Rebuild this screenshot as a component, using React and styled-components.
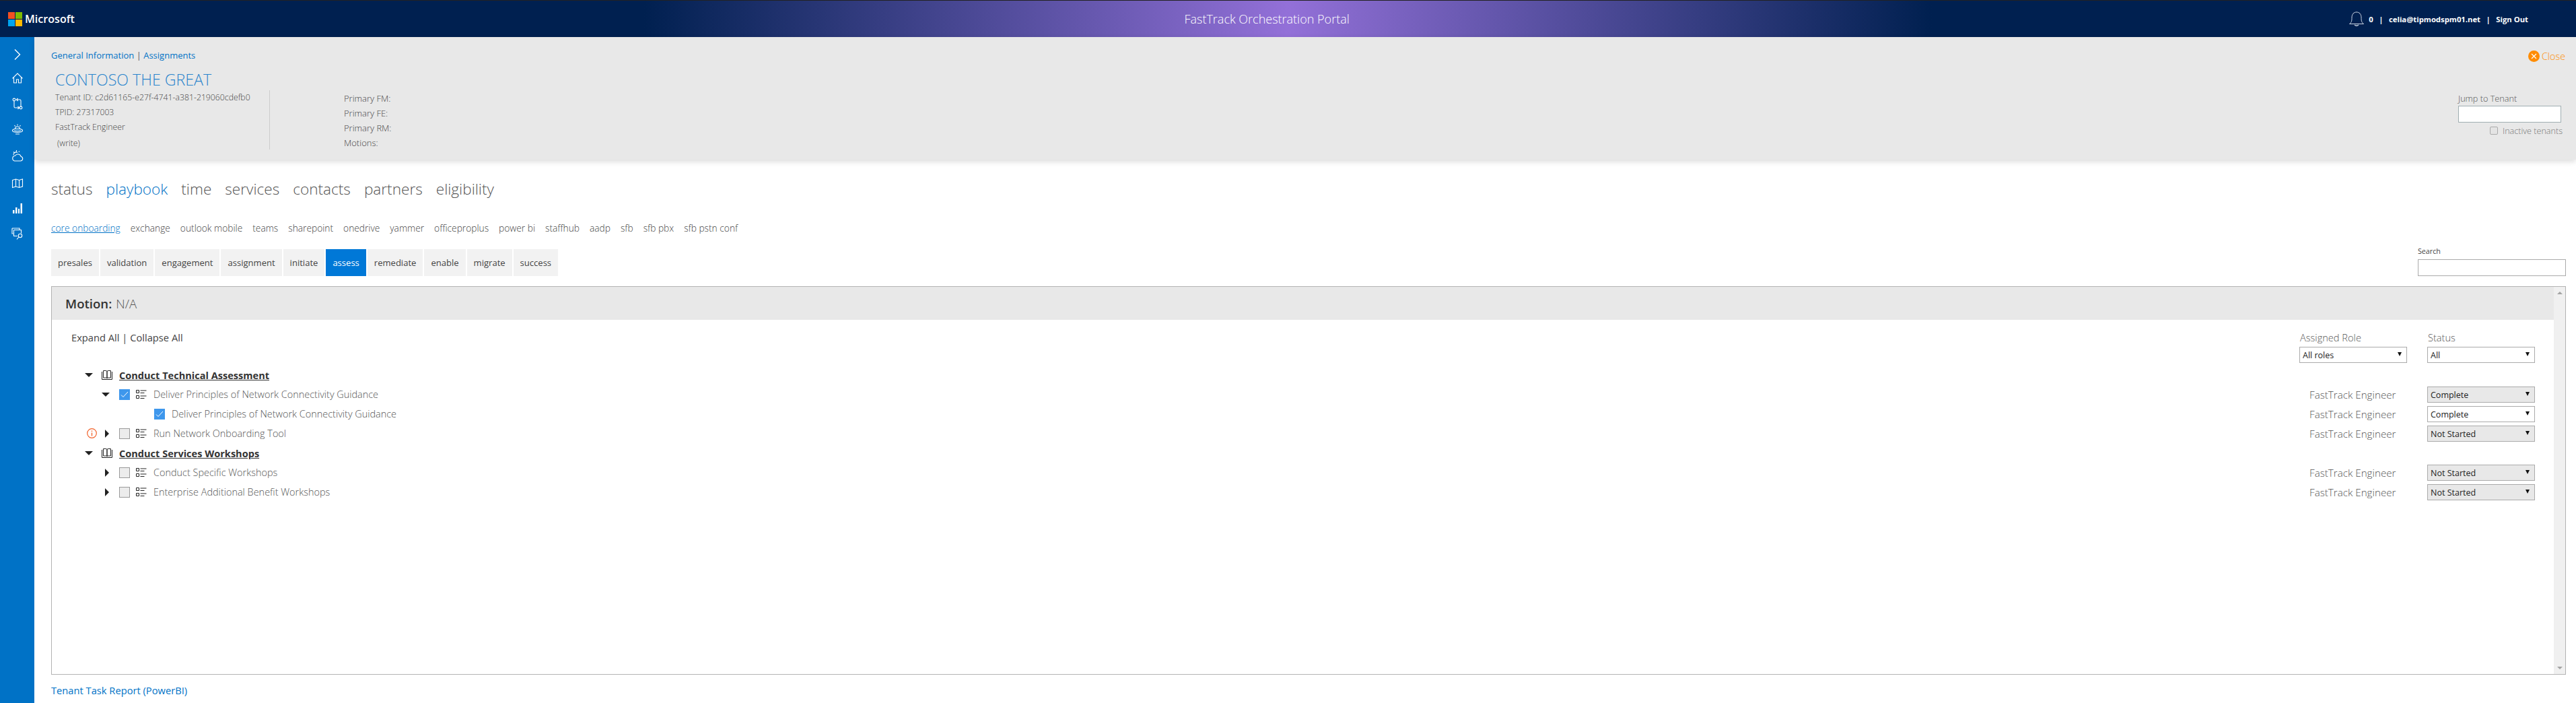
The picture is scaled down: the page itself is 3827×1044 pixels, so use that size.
import React from "react";
import styled, { createGlobalStyle } from "styled-components";

const Global = createGlobalStyle`
  html, body { margin: 0; padding: 0; background: #fff; height: 100%; overflow: hidden; }
  body { font-family: "Open Sans", "Noto Sans", sans-serif; font-weight: 300; color: #555; }
  * { box-sizing: border-box; }
`;

const Page = styled.div`display:flex;flex-direction:column;width:3827px;height:1044px;overflow:hidden;`;
const TopBar = styled.header`
  height:55px;flex:none;display:flex;align-items:center;padding:0 71px 0 12px;
  border-top:1px solid #222;color:#fff;
  background:linear-gradient(90deg,#002050 25%,#9370d8 50%,#002050 75%);
`;
const Logo = styled.div`display:flex;align-items:center;gap:4px;font-size:16.1px;font-weight:600;color:#fff;`;
const LogoGrid = styled.div`display:grid;grid-template-columns:10px 10px;grid-auto-rows:10px;gap:1px;`;
const Tile = styled.span`background:${p=>p.$c};`;
const PortalTitle = styled.div`flex:1;text-align:center;font-size:18px;font-weight:300;color:#fff;margin-left:164px;`;
const UserBox = styled.div`display:flex;align-items:center;font-size:11.3px;font-weight:700;color:#fff;white-space:nowrap;`;
const Sep = styled.span`margin:0 8.5px;`;
const Bell = styled.svg`width:24px;height:24px;margin-right:6px;`;

const Body = styled.div`flex:1;display:flex;min-height:0;`;
const Sidebar = styled.nav`width:51px;flex:none;background:#0072c6;display:flex;flex-direction:column;align-items:center;padding-top:8px;`;
const NavSlot = styled.div`height:${p=>p.$h}px;display:flex;align-items:center;justify-content:center;`;
const NavIcon = styled.svg`width:18px;height:18px;fill:none;stroke:#fff;stroke-width:${p=>p.$w||1.1};`;

const Main = styled.main`flex:1;min-width:0;display:flex;flex-direction:column;`;
const InfoPanel = styled.section`
  height:182px;flex:none;background:#e8e8e8;box-shadow:0 3px 8px rgba(0,0,0,.14);
  display:flex;justify-content:space-between;padding:18px 16px 0 25px;position:relative;
`;
const Crumbs = styled.div`font-size:13px;line-height:18px;color:#555;margin-bottom:12px;font-weight:400;`;
const CrumbLink = styled.span`color:#0072c6;`;
const Title = styled.h1`margin:0 0 0 6px;font-size:23.2px;line-height:31px;font-weight:300;color:#2a85cc;`;
const Details = styled.div`display:flex;margin-left:6px;`;
const DetailCol = styled.div`
  width:${p=>p.$w}px;height:88px;font-size:${p=>p.$divided?12.25:13}px;line-height:22px;color:#444;
  ${p=>p.$divided?"border-right:1px solid #ccc;":"padding:1px 0 0 110px;"}
`;
const Write = styled.div`margin:2px 0 0 3px;`;
const RightCol = styled.div`width:159px;display:flex;flex-direction:column;`;
const Close = styled.div`height:20px;display:flex;justify-content:flex-end;align-items:center;gap:3px;font-size:14.3px;color:#ff8c00;margin-bottom:44px;`;
const CloseDot = styled.svg`width:17px;height:17px;`;
const SmallLabel = styled.label`display:block;font-size:12.7px;line-height:18px;color:#555;`;
const JumpInput = styled.input`display:block;width:153px;height:25px;margin-top:2px;border:1px solid #a0aeb2;background:#fff;`;
const Inactive = styled.div`display:flex;align-items:center;gap:7px;height:14px;margin-top:5px;padding-left:47px;font-size:12.6px;color:#777;white-space:nowrap;`;
const MiniCheck = styled.span`width:12px;height:12px;border:1px solid #aaa;border-radius:2px;background:#e4e4e4;flex:none;`;

const Content = styled.div`padding:28px 15px 0 25px;display:flex;flex-direction:column;flex:1;min-height:0;`;
const BigTabs = styled.div`display:flex;gap:20px;height:32px;align-items:center;font-size:22.6px;line-height:32px;color:#555;`;
const BigTab = styled.span`color:${p=>p.$on?"#0072c6":"#555"};`;
const SubTabs = styled.div`display:flex;gap:15px;height:20px;margin-top:31px;align-items:center;font-size:13.75px;color:#444;`;
const SubTab = styled.span`color:${p=>p.$on?"#0072c6":"#444"};${p=>p.$on?"text-decoration:underline;":""}`;
const StageRow = styled.div`display:flex;align-items:flex-start;margin-top:22px;height:40px;`;
const Stage = styled.span`
  height:40px;display:flex;align-items:center;padding:0 10px;margin-right:2px;font-size:13.05px;font-weight:400;
  background:${p=>p.$on?"#0078d7":"#f2f2f2"};color:${p=>p.$on?"#fff":"#444"};
`;
const SearchBox = styled.div`margin-left:auto;width:220px;margin-top:-4px;`;
const SearchLabel = styled.label`display:block;font-size:10.7px;line-height:15px;font-weight:400;color:#444;`;
const SearchInput = styled.input`display:block;width:220px;height:25px;margin-top:4px;border:1px solid #aaa;background:#fff;`;

const Panel = styled.section`height:577px;margin-top:15px;border:1px solid #b3b3b3;display:flex;flex:none;`;
const PanelMain = styled.div`flex:1;min-width:0;display:flex;flex-direction:column;`;
const PanelHead = styled.div`height:49px;background:#e8e8e8;display:flex;align-items:center;padding-left:20px;font-size:18.6px;color:#555;`;
const Strong = styled.strong`font-weight:600;color:#333;margin-right:6px;`;
const Rail = styled.div`width:17px;flex:none;background:#f0f0f0;display:flex;flex-direction:column;justify-content:space-between;align-items:center;padding:7px 0;`;
const RailArrow = styled.span`width:0;height:0;border-left:4px solid transparent;border-right:4px solid transparent;${p=>p.$down?"border-top:4px solid #a3a3a3;":"border-bottom:4px solid #a3a3a3;"}`;
const Toolbar = styled.div`height:64px;padding:0 28px 0 29px;display:flex;justify-content:space-between;`;
const Expand = styled.div`font-size:14.7px;line-height:20px;margin-top:16px;font-weight:400;color:#444;`;
const Filters = styled.div`display:flex;gap:30px;padding-top:16px;`;
const FilterLabel = styled.label`display:block;font-size:14.6px;line-height:20px;height:24px;color:#555;padding-left:1px;`;
const SelectWrap = styled.div`position:relative;width:160px;height:24px;flex:none;&::after{content:"";position:absolute;right:8px;top:8px;border-left:3px solid transparent;border-right:3px solid transparent;border-top:6px solid #111;pointer-events:none;}`;
const Select = styled.select`
  appearance:none;width:160px;height:24px;display:block;padding:1px 0 0 4px;border:1px solid #aaa;border-radius:0;
  font-family:"Open Sans",sans-serif;font-size:12.5px;font-weight:400;color:#222;
  background:${p=>p.$muted?"#e8e8e8":"#fff"};
`;
const Rows = styled.div`margin-top:3px;padding:0 28px 0 49px;`;
const Row = styled.div`height:29px;display:flex;align-items:center;`;
const Slot = styled.span`width:${p=>p.$w}px;flex:none;display:flex;align-items:center;height:100%;`;
const WarnMark = styled.span`margin-left:3px;display:flex;`;
const CaretDown = styled.span`width:0;height:0;border-left:6px solid transparent;border-right:6px solid transparent;border-top:6px solid #222;`;
const CaretRight = styled.span`width:0;height:0;margin-left:5px;border-top:6px solid transparent;border-bottom:6px solid transparent;border-left:6px solid #222;`;
const Box = styled.span`
  width:16px;height:16px;display:flex;align-items:center;justify-content:center;
  ${p=>p.$on?"background:#3e97ec;":"background:#ececec;border:1px solid #999;"}
`;
const GroupTitle = styled.span`font-size:14.55px;font-weight:700;color:#333;text-decoration:underline;`;
const TaskText = styled.span`font-size:14.45px;color:#555;white-space:nowrap;`;
const Right = styled.span`margin-left:auto;display:flex;align-items:center;`;
const Role = styled.span`width:175px;font-size:15.2px;color:#555;`;
const Report = styled.div`margin-top:13px;font-size:14.7px;line-height:20px;color:#0072c6;font-weight:400;`;

const IconChevron = () => <NavIcon viewBox="0 0 18 18" $w={1.4}><path d="M5 1.5 12.5 9 5 16.5"/></NavIcon>;
const IconHome = () => <NavIcon viewBox="0 0 18 18"><path d="M1.500 9.500 9 2l7.500 7.500M3.500 8v8h4v-5h3v5h4V8"/></NavIcon>;
const IconFlow = () => <NavIcon viewBox="0 0 18 18"><circle cx="4" cy="3" r="1.900"/><circle cx="14" cy="15" r="1.900"/><path d="M4 5v8.500q0 1.500 1.500 1.500H11M9.500 13l2 2-2 2M14 13V4.500Q14 3 12.500 3H8M9.500 1 7.500 3l2 2"/></NavIcon>;
const IconLake = () => <NavIcon viewBox="0 0 18 18"><path d="M5.500 9.500a3.500 3.500 0 0 1 7 0zM9 2.500v2M4.500 4l1.200 1.600M13.500 4l-1.200 1.600"/><path d="M5 9.500C2 10 1.500 11 1.500 12c0 1.500 3 2.500 7.500 2.500s7.500-1 7.500-2.500c0-1-.5-2-3.500-2.500"/><path d="M4 12c2 1 8 1 10 0M6 17h6"/></NavIcon>;
const IconCloud = () => <NavIcon viewBox="0 0 18 18"><path d="M4.500 17h9a3.300 3.300 0 0 0 .7-6.500A4.800 4.800 0 0 0 5.500 9.200 4 4 0 0 0 4.500 17z"/><path d="M3 8a4 4 0 0 1 6-3.500M7.500 3V1M3 3.500l1.400 1.400M12 2.500 10.700 4"/></NavIcon>;
const IconMap = () => <NavIcon viewBox="0 0 18 18"><path d="M1.500 4.500 6.500 3l5 1.500L16.500 3v11l-5 1.500-5-1.500-5 1.500zM6.500 3v11M11.500 4.500v11"/></NavIcon>;
const BarsSvg = styled.svg`width:18px;height:18px;fill:#fff;`;
const IconBars = () => <BarsSvg viewBox="0 0 18 18"><path d="M2 12h2.500v5H2zM6 8h2.500v9H6zM10 10h2v7h-2zM13.500 2H16v15h-2.500z"/></BarsSvg>;
const IconScreen = () => <NavIcon viewBox="0 0 18 18"><path d="M1 1h11v2M1 1v8h1.500M3.500 3.500h11v5M3.500 3.500v9h5.500"/><circle cx="13" cy="12" r="2.700"/><path d="M11 14l-3 3.500"/></NavIcon>;

const BookSvg = styled.svg`width:16px;height:15px;fill:none;stroke:#222;stroke-width:1;`;
const Book = () => <BookSvg viewBox="0 0 16 15"><path d="M.5 3v11.500h15V3M2.500 1.500h4q1.500 0 1.500 1.500v10q0-1-1.500-1h-4zM13.500 1.500h-4Q8 1.500 8 3v10q0-1 1.500-1h4z"/></BookSvg>;
const ListSvg = styled.svg`width:16px;height:14px;fill:none;stroke:#222;stroke-width:1;`;
const ListIcon = () => <ListSvg viewBox="0 0 16 14"><path d="M.5.500h4v4h-4zM.5 8.500h4v4h-4zM6.500 1h9M6.500 4.500h6M6.500 9h9M6.500 12.500h6"/></ListSvg>;
const Info = () => <svg width="15" height="15" viewBox="0 0 15 15" fill="none" stroke="#f2622a"><circle cx="7.500" cy="7.500" r="6.800" strokeWidth="1.200"/><path d="M7.500 6.500v5M7.500 3.500v1.500" strokeWidth="1.300"/></svg>;
const Tick = () => <svg width="12" height="10" viewBox="0 0 12 10" fill="none" stroke="#fff" strokeWidth="1"><path d="M1 5.500 4 8.500 11 1"/></svg>;

const navs = [[36,IconChevron],[34,IconHome],[42,IconFlow],[32,IconLake],[48,IconCloud],[34,IconMap],[40,IconBars],[36,IconScreen]];
const bigTabs = ["status","playbook","time","services","contacts","partners","eligibility"];
const subTabs = ["core onboarding","exchange","outlook mobile","teams","sharepoint","onedrive","yammer","officeproplus","power bi","staffhub","aadp","sfb","sfb pbx","sfb pstn conf"];
const stages = ["presales","validation","engagement","assignment","initiate","assess","remediate","enable","migrate","success"];

const TaskRow = ({text,open,done,warn,status}) => (
  <Row>
    <Slot $w={25}>{warn && <WarnMark><Info/></WarnMark>}</Slot>
    <Slot $w={26}>{open ? <CaretDown/> : <CaretRight/>}</Slot>
    <Slot $w={25}><Box $on={done}>{done && <Tick/>}</Box></Slot>
    <Slot $w={26}><ListIcon/></Slot>
    <TaskText>{text}</TaskText>
    <Right><Role>FastTrack Engineer</Role><SelectWrap><Select $muted defaultValue={status}><option>{status}</option></Select></SelectWrap></Right>
  </Row>
);

export default function App(){
  return <Page><Global/>
    <TopBar>
      <Logo><LogoGrid><Tile $c="#f25022"/><Tile $c="#7fba00"/><Tile $c="#00a4ef"/><Tile $c="#ffb900"/></LogoGrid>Microsoft</Logo>
      <PortalTitle>FastTrack Orchestration Portal</PortalTitle>
      <UserBox>
        <Bell viewBox="0 0 24 24" fill="none" stroke="#cdd5e2" strokeWidth="1"><path d="M1.500 19.500C5 17 5 14 5 10c0-5 3-8 7-8s7 3 7 8c0 4 0 7 3.500 9.500z"/><path d="M9 21q3 2.500 6 0" strokeWidth="1.500"/></Bell>
        0<Sep>|</Sep>celia@tipmodspm01.net<Sep>|</Sep>Sign Out
      </UserBox>
    </TopBar>
    <Body>
      <Sidebar>{navs.map(([h,I],i)=><NavSlot key={i} $h={h}><I/></NavSlot>)}</Sidebar>
      <Main>
        <InfoPanel>
          <div>
            <Crumbs><CrumbLink>General Information</CrumbLink> | <CrumbLink>Assignments</CrumbLink></Crumbs>
            <Title>CONTOSO THE GREAT</Title>
            <Details>
              <DetailCol $w={319} $divided>
                <div>Tenant ID: c2d61165-e27f-4741-a381-219060cdefb0</div>
                <div>TPID: 27317003</div>
                <div>FastTrack Engineer</div>
                <Write>(write)</Write>
              </DetailCol>
              <DetailCol $w={300}>
                <div>Primary FM:</div><div>Primary FE:</div><div>Primary RM:</div><div>Motions:</div>
              </DetailCol>
            </Details>
          </div>
          <RightCol>
            <Close><CloseDot viewBox="0 0 17 17"><circle cx="8.500" cy="8.500" r="8.500" fill="#ff8c00"/><path d="M5 5l7 7M12 5l-7 7" stroke="#fff" strokeWidth="1.200"/></CloseDot>Close</Close>
            <SmallLabel>Jump to Tenant</SmallLabel>
            <JumpInput/>
            <Inactive><MiniCheck/>Inactive tenants</Inactive>
          </RightCol>
        </InfoPanel>
        <Content>
          <BigTabs>{bigTabs.map(t=><BigTab key={t} $on={t==="playbook"}>{t}</BigTab>)}</BigTabs>
          <SubTabs>{subTabs.map((t,i)=><SubTab key={t} $on={i===0}>{t}</SubTab>)}</SubTabs>
          <StageRow>
            {stages.map(t=><Stage key={t} $on={t==="assess"}>{t}</Stage>)}
            <SearchBox><SearchLabel>Search</SearchLabel><SearchInput/></SearchBox>
          </StageRow>
          <Panel>
            <PanelMain>
              <PanelHead><Strong>Motion:</Strong>N/A</PanelHead>
              <Toolbar>
                <Expand>Expand All | Collapse All</Expand>
                <Filters>
                  <div><FilterLabel>Assigned Role</FilterLabel><SelectWrap><Select defaultValue="All roles"><option>All roles</option></Select></SelectWrap></div>
                  <div><FilterLabel>Status</FilterLabel><SelectWrap><Select defaultValue="All"><option>All</option></Select></SelectWrap></div>
                </Filters>
              </Toolbar>
              <Rows>
                <Row><Slot $w={25}><CaretDown/></Slot><Slot $w={26}><Book/></Slot><GroupTitle>Conduct Technical Assessment</GroupTitle></Row>
                <TaskRow open done text="Deliver Principles of Network Connectivity Guidance" status="Complete"/>
                <Row>
                  <Slot $w={103}/>
                  <Slot $w={26}><Box $on><Tick/></Box></Slot>
                  <TaskText>Deliver Principles of Network Connectivity Guidance</TaskText>
                  <Right><Role>FastTrack Engineer</Role><SelectWrap><Select defaultValue="Complete"><option>Complete</option></Select></SelectWrap></Right>
                </Row>
                <TaskRow warn text="Run Network Onboarding Tool" status="Not Started"/>
                <Row><Slot $w={25}><CaretDown/></Slot><Slot $w={26}><Book/></Slot><GroupTitle>Conduct Services Workshops</GroupTitle></Row>
                <TaskRow text="Conduct Specific Workshops" status="Not Started"/>
                <TaskRow text="Enterprise Additional Benefit Workshops" status="Not Started"/>
              </Rows>
            </PanelMain>
            <Rail><RailArrow/><RailArrow $down/></Rail>
          </Panel>
          <Report>Tenant Task Report (PowerBI)</Report>
        </Content>
      </Main>
    </Body>
  </Page>;
}
